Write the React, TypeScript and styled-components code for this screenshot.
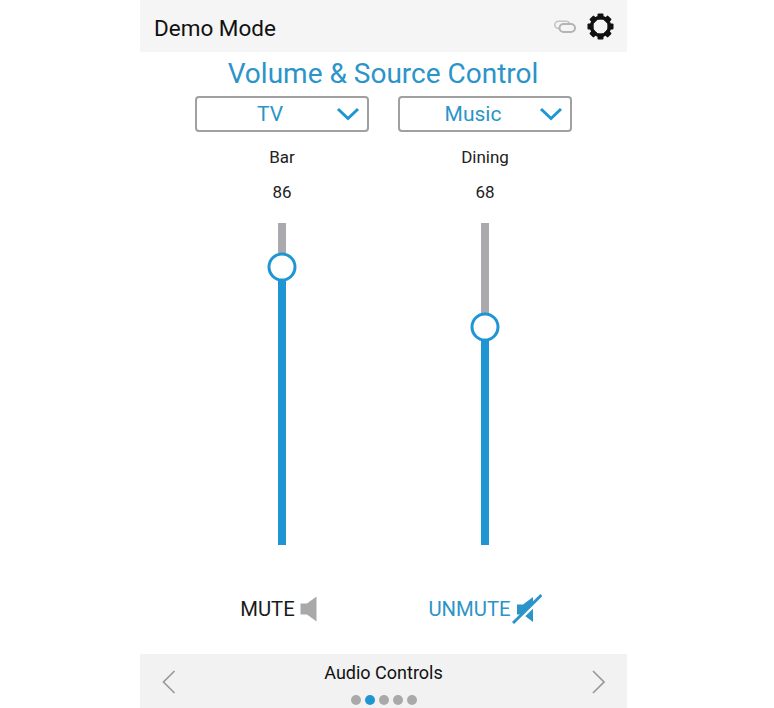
import { FunctionComponent } from "react";
import styled, { createGlobalStyle } from "styled-components";

const GlobalStyle = createGlobalStyle`
  html, body {
    margin: 0;
    padding: 0;
    background: #fff;
    font-family: Roboto, "Liberation Sans", sans-serif;
  }
`;

const Phone = styled.div`
  width: 487px;
  height: 708px;
  margin-left: 140px;
  display: flex;
  flex-flow: column nowrap;
  overflow: hidden;
`;

const Header = styled.header`
  height: 52px;
  flex: 0 0 auto;
  box-sizing: border-box;
  background: #f5f5f5;
  display: flex;
  align-items: center;
  justify-content: space-between;
  padding: 0 13px 0 14px;
  font-size: 22.5px;
  color: #111;
`;

const HeaderTitle = styled.span`
  margin-top: 3px;
`;

const HeaderIcons = styled.div`
  display: flex;
  align-items: center;
  gap: 11px;
`;

const Title = styled.h1`
  margin: 7px 0 0;
  padding-right: 1px;
  height: 37px;
  line-height: 30px;
  font-size: 28px;
  font-weight: 400;
  text-align: center;
  color: #2b94c8;
`;

const Columns = styled.main`
  flex: 1;
  display: flex;
  justify-content: center;
  gap: 29px;
`;

const Column = styled.section`
  width: 174px;
  display: flex;
  flex-flow: column nowrap;
  align-items: center;
`;

const Select = styled.div`
  width: 100%;
  height: 36px;
  box-sizing: border-box;
  border: 2px solid #a0a0a0;
  border-radius: 4px;
  display: flex;
  align-items: center;
  padding: 0 7px 0 0;
  color: #2b94c8;
  font-size: 21px;
`;

const SelectLabel = styled.span`
  flex: 1;
  text-align: center;
  padding-left: 7px;
`;

const ZoneName = styled.div`
  margin-top: 15px;
  height: 20px;
  line-height: 20px;
  font-size: 17px;
  color: #222;
`;

const ZoneValue = styled.div`
  margin-top: 15px;
  height: 20px;
  line-height: 20px;
  font-size: 17px;
  color: #222;
`;

const Track = styled.div`
  position: relative;
  margin-top: 21px;
  width: 8px;
  height: 322px;
  background: #a9a9ae;
`;

const Fill = styled.div`
  position: absolute;
  left: 0;
  right: 0;
  bottom: 0;
  background: #1f96d3;
`;

const Knob = styled.div`
  position: absolute;
  left: 50%;
  width: 29px;
  height: 29px;
  box-sizing: border-box;
  border: 3px solid #1f96d3;
  border-radius: 50%;
  background: #fff;
  transform: translate(-50%, -50%);
`;

const MuteButton = styled.div<{ $active?: boolean }>`
  margin-top: 49px;
  height: 30px;
  display: flex;
  align-items: center;
  justify-content: center;
  gap: ${(p) => (p.$active ? "1px" : "5px")};
  padding-right: ${(p) => (p.$active ? "0" : "7px")};
  font-size: 20.3px;
  color: ${(p) => (p.$active ? "#2b94c8" : "#1a1a1a")};
`;

const Footer = styled.footer`
  position: relative;
  height: 54px;
  flex: 0 0 auto;
  background: #f2f2f2;
  display: flex;
  align-items: flex-start;
  justify-content: space-between;
  padding: 16px 22px 0;
  box-sizing: border-box;
`;

const FooterCenter = styled.div`
  display: flex;
  flex-flow: column nowrap;
  align-items: center;
  margin-top: -8px;
  font-size: 18px;
  color: #111;
`;

const FooterLabel = styled.div`
  height: 22px;
  line-height: 22px;
`;

const Dots = styled.div`
  margin-top: 11px;
  display: flex;
  gap: 4px;
`;

const Dot = styled.span<{ $active?: boolean }>`
  width: 10px;
  height: 10px;
  border-radius: 50%;
  background: ${(p) => (p.$active ? "#1f96d3" : "#a9a9a9")};
`;

const LinkIcon = () => (
  <svg width="22" height="16" viewBox="0 0 22 16" fill="none">
    <path
      d="M5 10.5H4.5A3.6 3.6 0 0 1 4.5 3.2h7.5a4 4 0 0 1 3.4 1.8"
      stroke="#c4c4c4"
      strokeWidth="1.6"
      strokeLinecap="round"
    />
    <rect x="5.5" y="6" width="15.5" height="8" rx="4" stroke="#b4b4b4" strokeWidth="2" />
  </svg>
);

const GearIcon = () => (
  <svg width="27" height="27" viewBox="0 0 27 27">
    {[0, 45, 90, 135, 180, 225, 270, 315].map((a) => (
      <rect key={a} x="10.5" y="0.5" width="6" height="6" rx="1" fill="#111" transform={`rotate(${a} 13.5 13.5)`} />
    ))}
    <circle cx="13.5" cy="13.5" r="9" fill="none" stroke="#111" strokeWidth="3.4" />
  </svg>
);

const Chevron = () => (
  <svg width="24" height="14" viewBox="0 0 24 14" fill="none">
    <path d="M2 2l10 9.5L22 2" stroke="#1f96d3" strokeWidth="3" />
  </svg>
);

const Speaker = () => (
  <svg width="17" height="26" viewBox="0 0 17 26">
    <path d="M0.5 7.5H7L16.5 0.5V25.5L7 18.5H0.5Z" fill="#a9a9a9" />
  </svg>
);

const MutedSpeaker = () => (
  <svg width="30" height="30" viewBox="0 0 30 30">
    <path d="M5 10.5H11L21 3V28L11 20.5H5Z" fill="#2b94c8" />
    <path d="M2 31L31 3" stroke="#fff" strokeWidth="3" />
    <path d="M1 29L29.5 1" stroke="#2b94c8" strokeWidth="3" />
  </svg>
);

const Arrow: FunctionComponent<{ flip?: boolean }> = ({ flip }) => (
  <svg width="14" height="24" viewBox="0 0 14 24" fill="none">
    <path
      d={flip ? "M2 1l11 11L2 23" : "M12.5 1L1.5 12l11 11"}
      stroke="#9a9a9a"
      strokeWidth="1.7"
    />
  </svg>
);

type Zone = {
  source: string;
  name: string;
  level: number;
  muted: boolean;
};

const zones: Zone[] = [
  { source: "TV", name: "Bar", level: 86, muted: false },
  { source: "Music", name: "Dining", level: 68, muted: true },
];

// the knob travels slightly past the ends of the track
const knobTop = (level: number) => (100 - level) * 3.33 - 3;

const App: FunctionComponent = () => {
  return (
    <>
      <GlobalStyle />
      <Phone>
        <Header>
          <HeaderTitle>Demo Mode</HeaderTitle>
          <HeaderIcons>
            <LinkIcon />
            <GearIcon />
          </HeaderIcons>
        </Header>
        <Title>Volume &amp; Source Control</Title>
        <Columns>
          {zones.map((zone) => (
            <Column key={zone.name}>
              <Select>
                <SelectLabel>{zone.source}</SelectLabel>
                <Chevron />
              </Select>
              <ZoneName>{zone.name}</ZoneName>
              <ZoneValue>{zone.level}</ZoneValue>
              <Track>
                <Fill style={{ height: `${zone.level}%` }} />
                <Knob style={{ top: `${knobTop(zone.level)}px` }} />
              </Track>
              <MuteButton $active={zone.muted}>
                {zone.muted ? "UNMUTE" : "MUTE"}
                {zone.muted ? <MutedSpeaker /> : <Speaker />}
              </MuteButton>
            </Column>
          ))}
        </Columns>
        <Footer>
          <Arrow />
          <FooterCenter>
            <FooterLabel>Audio Controls</FooterLabel>
            <Dots>
              {[0, 1, 2, 3, 4].map((i) => (
                <Dot key={i} $active={i === 1} />
              ))}
            </Dots>
          </FooterCenter>
          <Arrow flip />
        </Footer>
      </Phone>
    </>
  );
};

export default App;
